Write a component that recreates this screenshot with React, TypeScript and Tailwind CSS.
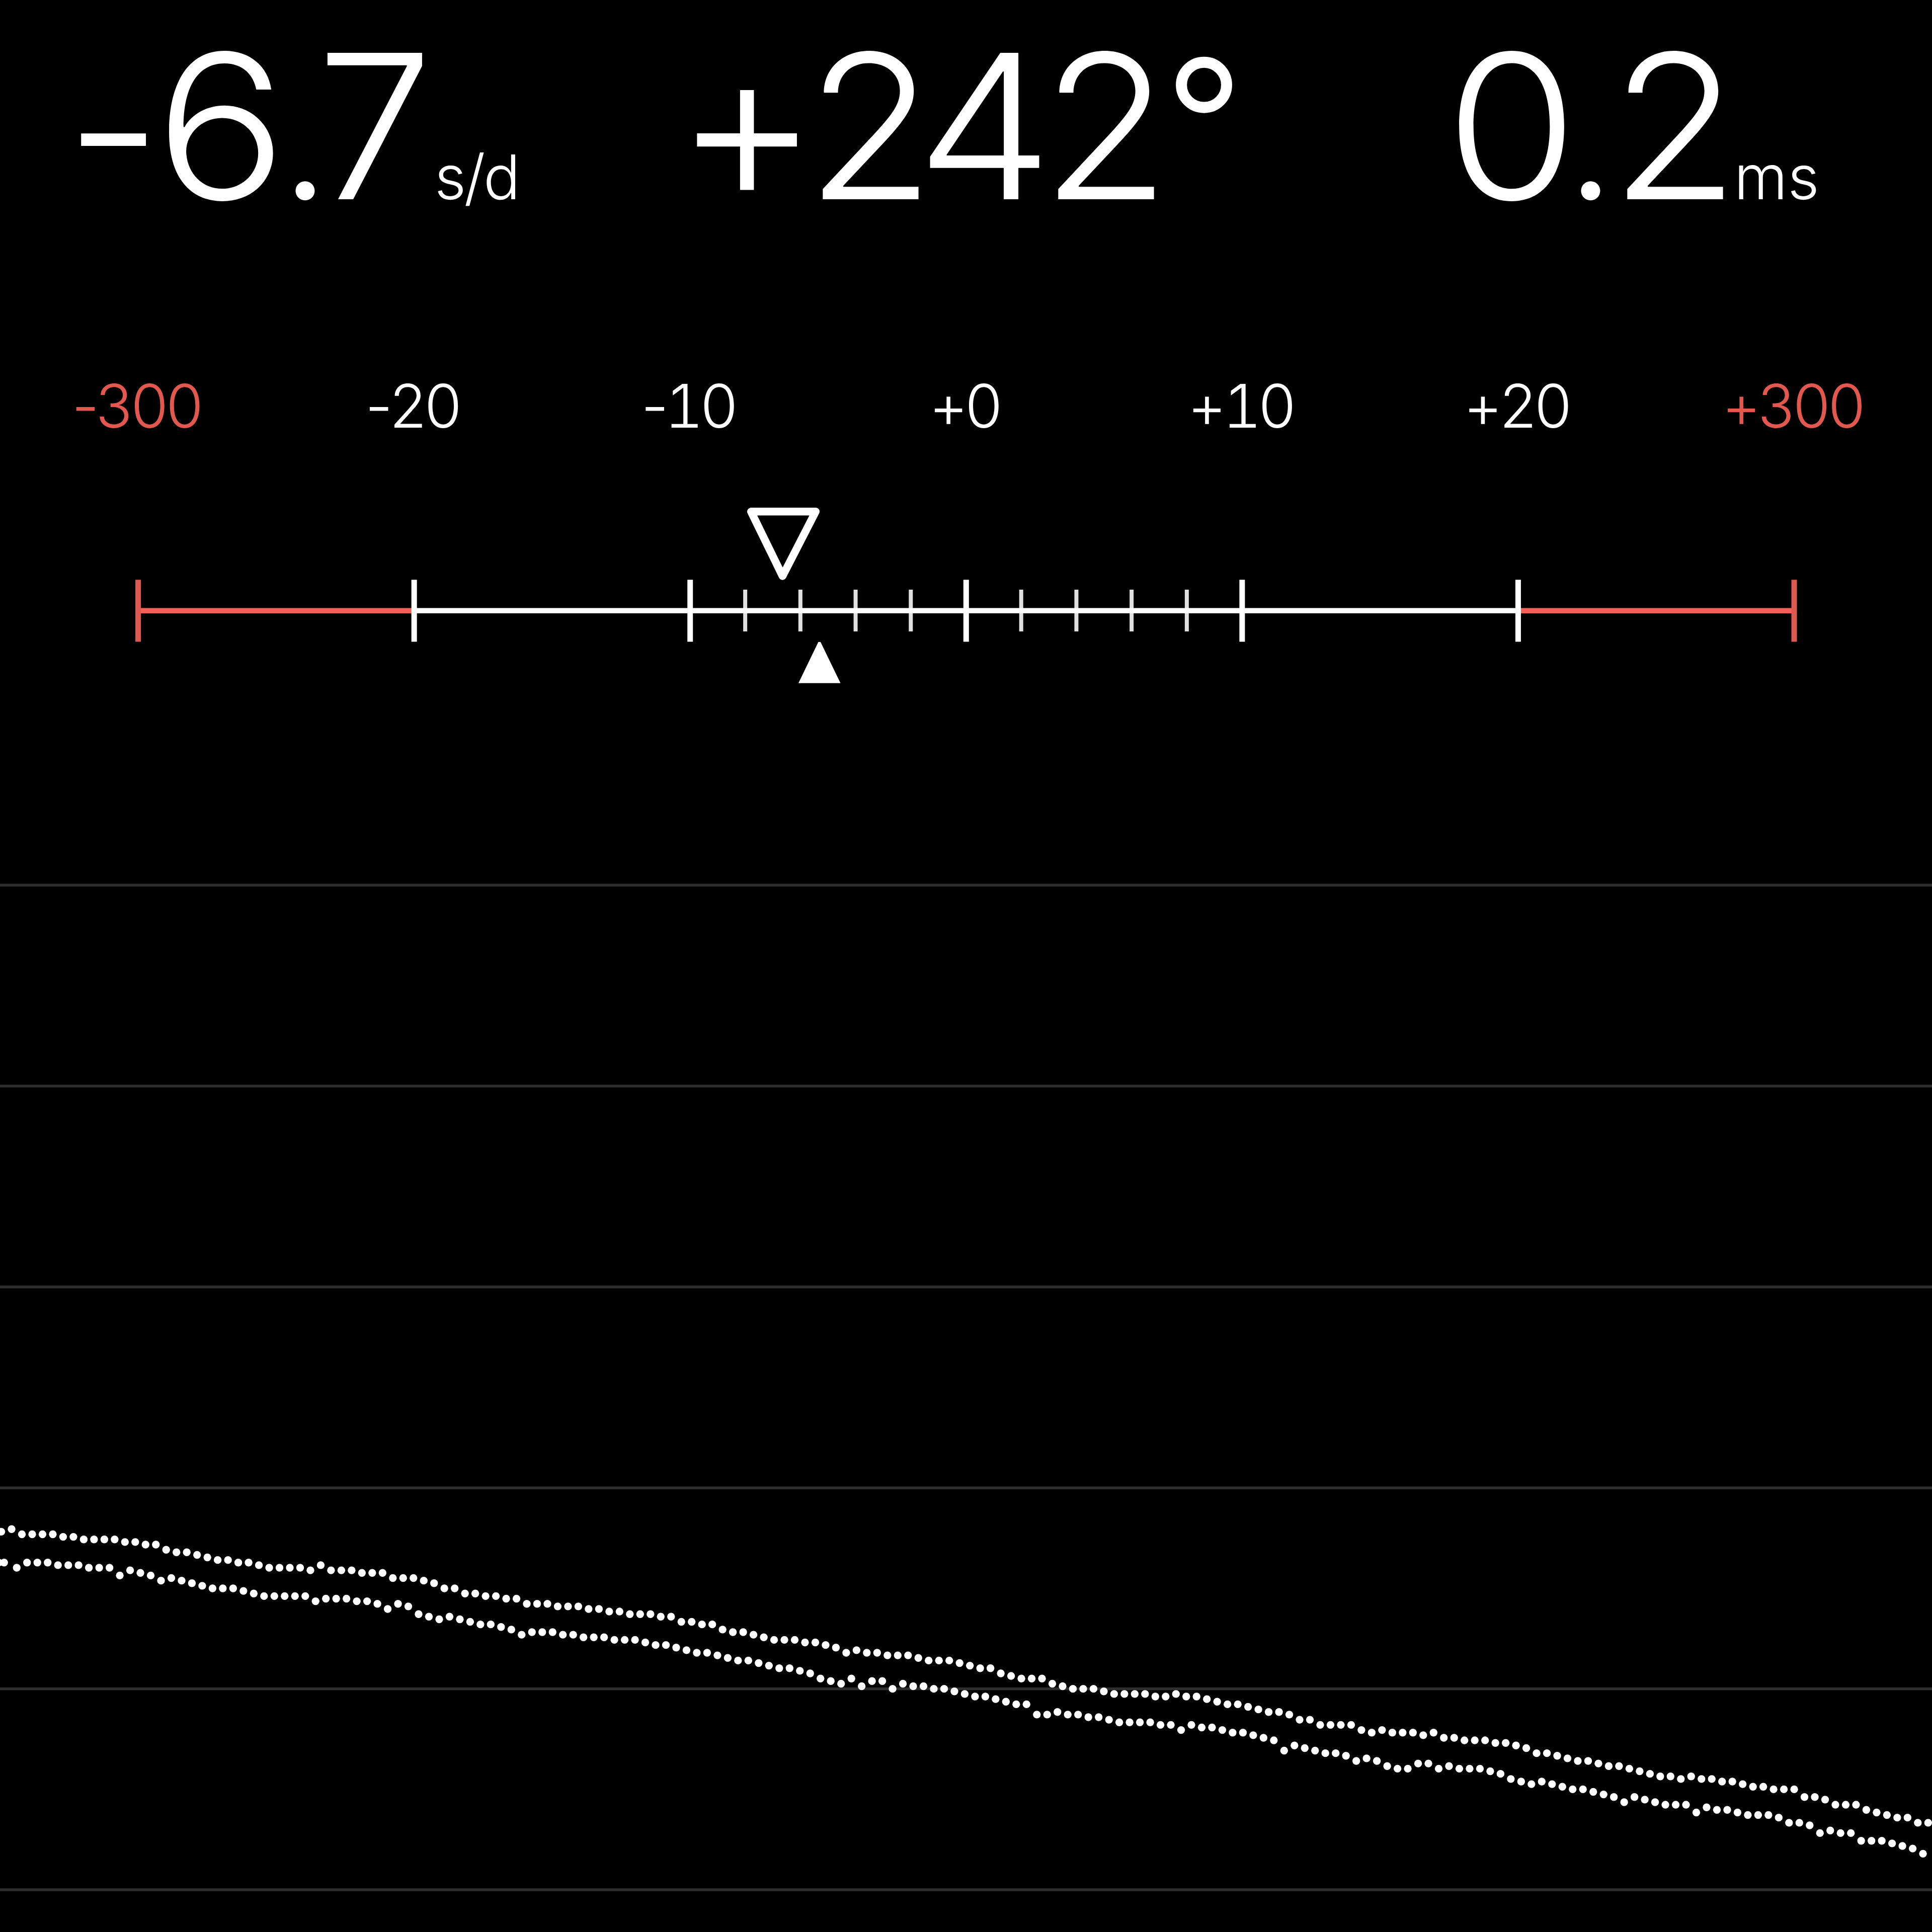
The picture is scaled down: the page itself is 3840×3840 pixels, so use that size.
type GlyphSpec = { ch: string; cls: string };

const RATE: GlyphSpec[] = [
  { ch: '-', cls: 'scale-x-[1.06] translate-y-[6px]' },
  { ch: '6', cls: 'ml-[3px] scale-x-[1.09]' },
  { ch: '.', cls: '-ml-[10px] scale-[0.9] origin-[50%_87%]' },
  { ch: '7', cls: '-ml-[30px] scale-x-[1.035]' },
];

const AMPLITUDE: GlyphSpec[] = [
  { ch: '+', cls: 'scale-[1.1] origin-[50%_58%] -translate-y-[4px]' },
  { ch: '2', cls: '-ml-[8px] scale-x-[1.045]' },
  { ch: '4', cls: '-ml-[22px] scale-x-[1.08]' },
  { ch: '2', cls: '-ml-[7.6px] scale-x-[1.045]' },
  { ch: '°', cls: '-ml-[18px] scale-[0.86] origin-[50%_29%] translate-y-[3px] [-webkit-text-stroke:3px_#fff]' },
];

const BEAT_ERROR: GlyphSpec[] = [
  { ch: '0', cls: 'scale-x-[1.065]' },
  { ch: '.', cls: '-ml-[23px] scale-[0.9] origin-[50%_87%]' },
  { ch: '2', cls: '-ml-[12px] scale-x-[1.045]' },
];

function Readout({ glyphs, unit, unitClass, className }: { glyphs: GlyphSpec[]; unit?: string; unitClass?: string; className?: string }) {
  return (
    <div className={'flex items-baseline whitespace-nowrap ' + (className ?? '')}>
      {glyphs.map((g, i) => (
        <span key={i} className={'block text-[400px] leading-none ' + g.cls}>{g.ch}</span>
      ))}
      {unit && <span className={'block text-[122px] leading-none ' + (unitClass ?? '')}>{unit}</span>}
    </div>
  );
}

const LABELS = ['-300', '-20', '-10', '+0', '+10', '+20', '+300'];

const STEP = 3840 / 7;
const MAJOR = [0, 1, 2, 3, 4, 5, 6].map((i) => STEP / 2 + STEP * i);
const RED = '#f26057';

function Gauge() {
  const minor = [-4, -3, -2, -1, 1, 2, 3, 4].map((i) => 1920 + (i * STEP) / 5);
  return (
    <svg className="block w-full h-[533px]" viewBox="0 867 3840 533">
      <rect x={MAJOR[0]} y="1208.5" width={STEP} height="10.5" fill={RED} />
      <rect x={MAJOR[5]} y="1208.5" width={STEP} height="10.5" fill={RED} />
      {minor.map((x) => (
        <rect key={x} x={x - 4} y="1172" width="8" height="83" fill="#e0e0e0" />
      ))}
      <rect x={MAJOR[1]} y="1208.5" width={STEP * 4} height="10.5" fill="#fff" />
      {MAJOR.map((x, i) => (
        <rect key={x} x={x - 5.2} y="1152.3" width="11" height="123.2" fill={i === 0 || i === 6 ? '#dc5a52' : '#fff'} />
      ))}
      <path d="M1492.7 1016.8H1621.3L1555.4 1145Z" fill="none" stroke="#fff" strokeWidth="15.4" strokeLinejoin="round" />
      <path d="M1626.5 1276H1630.9L1670.5 1357.7H1587Z" fill="#fff" />
    </svg>
  );
}

/* One sample of the trace is U pixels; values are rows below BASE. */
const U = 5.12;
const BASE = 593.6;

const TICK = [
  1, 0, 2, 2, 2, 2, 3, 3, 4, 4, 4, 4, 5, 5, 6, 6, 8, 9, 9, 10, 11, 12, 12, 13, 13, 14, 15, 15, 15, 15, 16, 14,
  16, 16, 16, 17, 17, 17, 19, 19, 19, 20, 21, 23, 23, 25, 25, 26, 26, 27, 27, 29, 29, 29, 30, 30, 30, 31, 31, 32, 32, 33, 33,
  33, 34, 34, 36, 36, 37, 37, 39, 40, 40, 41, 42, 43, 43, 43, 44, 44, 45, 46, 48, 47, 48, 48, 49, 49, 49, 50, 51, 51, 51, 52,
  53, 54, 54, 56, 57, 58, 58, 58, 60, 61, 62, 62, 62, 63, 64, 64, 64, 64, 65, 65, 64, 65, 65, 66, 67, 68, 68, 69, 70, 71, 71,
  72, 74, 74, 76, 76, 76, 76, 78, 79, 78, 79, 79, 79, 80, 79, 81, 81, 82, 82, 82, 83, 83, 84, 85, 87, 87, 88, 89, 90, 90, 91, 92,
  92, 93, 94, 95, 96, 96, 97, 96, 97, 97, 98, 98, 99, 100, 100, 101, 101, 101, 104, 104, 105, 107, 107, 107, 109, 110, 111, 112, 112, 114, 114,
];

const TOCK = [
  15, 13, 13, 13, 14, 14, 14, 15, 15, 15, 18, 16, 17, 18, 20, 19, 20, 21, 22, 23, 23, 23, 24, 25, 26, 26, 26, 26, 26, 28,
  27, 27, 27, 28, 28, 29, 31, 29, 30, 33, 34, 35, 34, 35, 36, 37, 37, 38, 39, 41, 40, 40, 40, 41, 41, 42, 42, 42, 43, 43, 43,
  44, 45, 45, 46, 47, 48, 48, 49, 50, 51, 51, 52, 53, 54, 54, 55, 56, 58, 59, 60, 58, 61, 59, 59, 62, 60, 61, 61, 62, 62, 63,
  64, 65, 65, 66, 67, 68, 68, 72, 72, 71, 72, 72, 73, 73, 74, 75, 75, 75, 75, 76, 76, 78, 76, 77, 77, 78, 79, 79, 80, 81, 82,
  86, 84, 85, 86, 87, 87, 88, 90, 89, 90, 92, 93, 93, 91, 91, 93, 92, 93, 93, 93, 94, 95, 97, 98, 99, 98, 99, 100, 101, 101, 102, 103,
  104, 106, 104, 105, 106, 107, 107, 107, 110, 108, 109, 109, 110, 111, 111, 111, 112, 114, 114, 115, 118, 117, 118, 118, 121, 121, 121, 122, 123, 124, 126,
];

function Trace() {
  return (
    <svg className="block w-full h-[2440px]" viewBox="0 1400 3840 2440">
      {[0, 1, 2, 3, 4, 5].map((i) => (
        <rect key={i} x="0" y={1756.5 + i * 399.36} width="3840" height="5.5" fill="#2e2e2e" />
      ))}
      <g fill="#fff">
        {TICK.map((n, k) => (
          <circle key={k} cx={(0.5 + 4 * k) * U} cy={(BASE + n) * U} r="7.7" />
        ))}
        <circle cx="-1" cy={(BASE + 13) * U} r="7" />
        <circle cx="8.2" cy={(BASE + 13) * U} r="7.7" />
        {TOCK.map((n, k) => (
          <circle key={k} cx={(6.5 + 4 * k) * U} cy={(BASE + n) * U} r="7.7" />
        ))}
      </g>
    </svg>
  );
}

export default function App() {
  return (
    <div className="w-[3840px] h-[3840px] overflow-hidden bg-black text-white font-['Inter',sans-serif] font-light">
      <header className="grid grid-cols-[1354px_1527px_959px] h-[450px] pt-[50px]">
        <Readout glyphs={RATE} unit="s/d" unitClass="ml-[7px] tracking-[-4px]" className="pl-[135px]" />
        <Readout glyphs={AMPLITUDE} />
        <Readout glyphs={BEAT_ERROR} unit="ms" unitClass="-ml-[5px]" />
      </header>
      <div className="mt-[297px] grid grid-cols-7 text-center text-[120px] leading-none tracking-[-8px] tabular-nums">
        {LABELS.map((l, i) => (
          <span key={l} className={'pr-[8px] ' + (i === 0 || i === 6 ? 'text-[#e2584f]' : '')}>
            <span className="proportional-nums">{l[0]}</span>
            {l.slice(1)}
          </span>
        ))}
      </div>
      <Gauge />
      <Trace />
    </div>
  );
}
